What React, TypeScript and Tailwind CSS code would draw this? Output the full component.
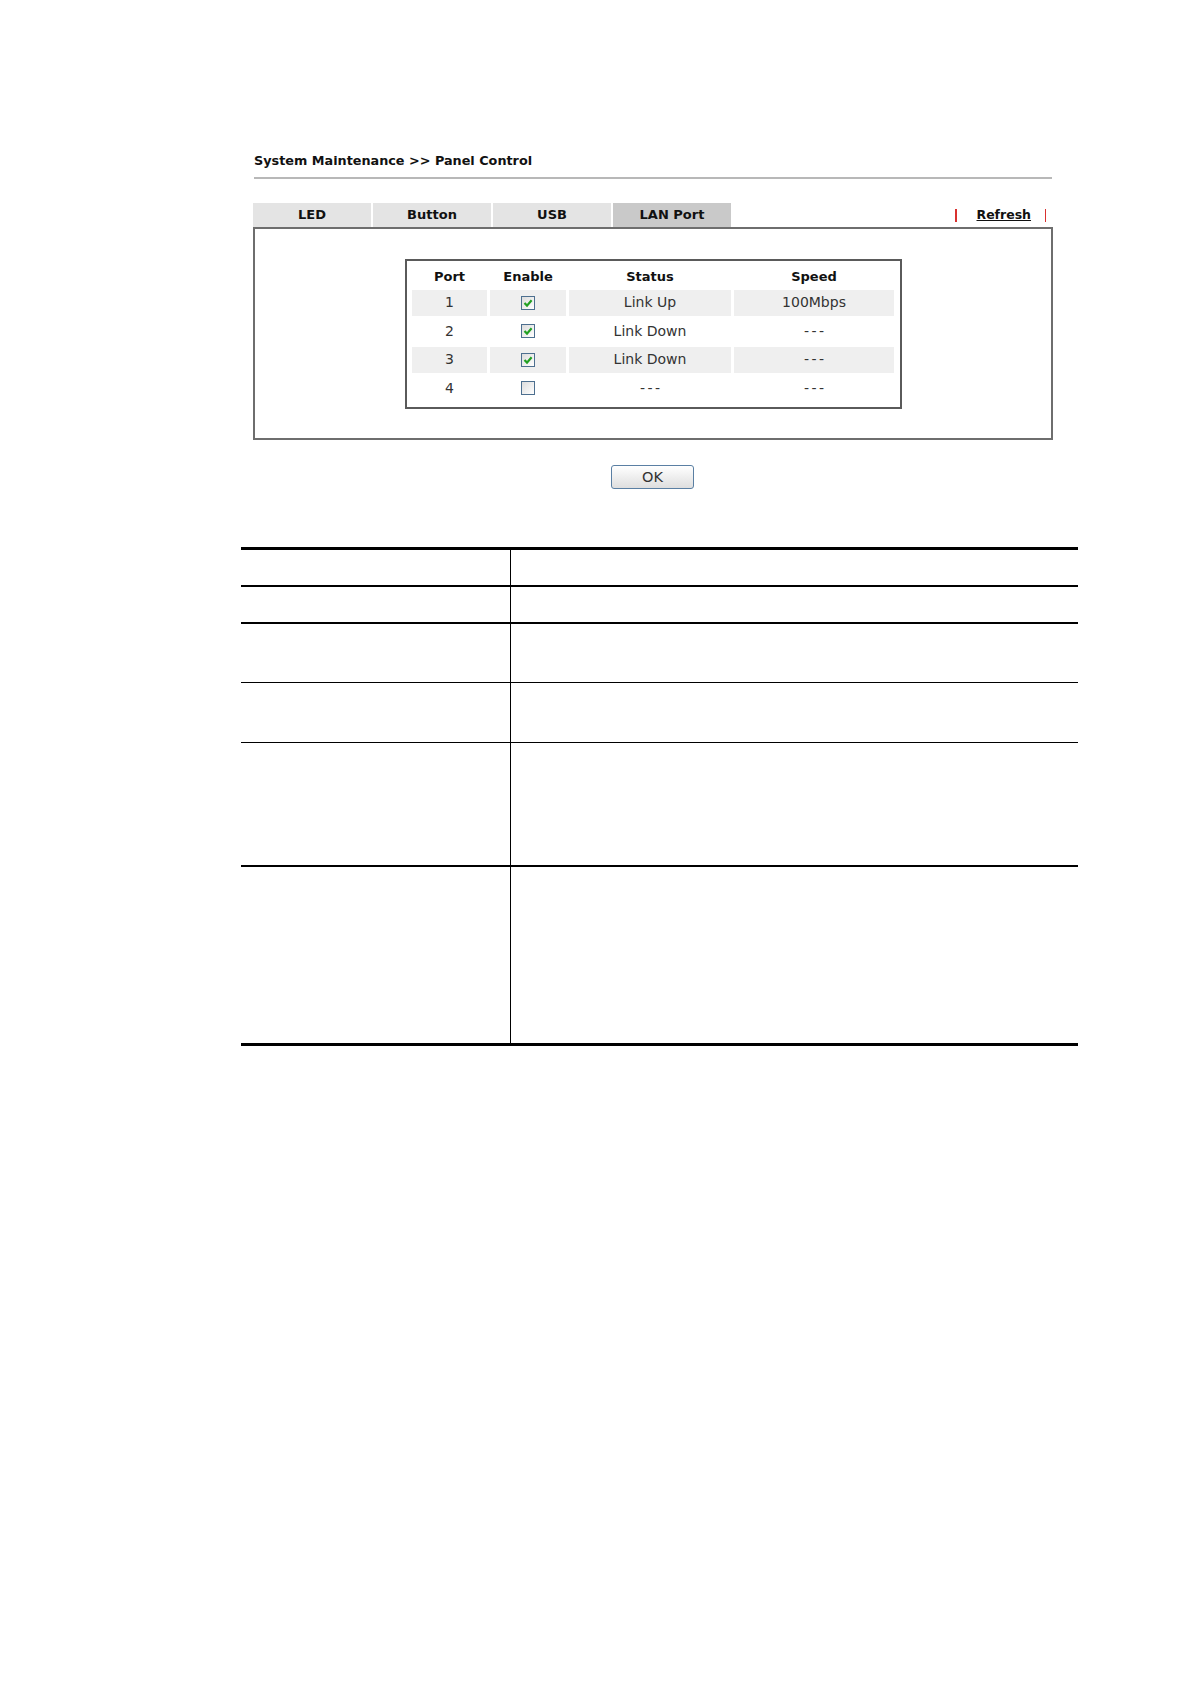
import React from "react";

const font = { fontFamily: '"DejaVu Sans", Verdana, sans-serif' };

function CheckBox({ checked }: { checked: boolean }) {
  return (
    <div className="w-[14px] h-[14px] border border-[#4d6f8f] bg-gradient-to-br from-[#dcdcdc] to-[#ffffff] flex items-center justify-center">
      {checked && (
        <svg width="10" height="10" viewBox="0 0 10 10">
          <path d="M1.5 5 L4 7.6 L8.6 2.2" fill="none" stroke="#22a022" strokeWidth="2.2" />
        </svg>
      )}
    </div>
  );
}

function Dash() {
  return <span className="tracking-[2.5px] pl-[2.5px]">---</span>;
}

const rows = [
  { port: "1", enable: true, status: "Link Up", speed: "100Mbps" },
  { port: "2", enable: true, status: "Link Down", speed: "---" },
  { port: "3", enable: true, status: "Link Down", speed: "---" },
  { port: "4", enable: false, status: "---", speed: "---" },
];

function Cell({ v }: { v: string }) {
  return v === "---" ? <Dash /> : <>{v}</>;
}

export default function App() {
  return (
    <div className="w-[1190px] min-h-[1684px] bg-white text-black" style={font}>
      <div className="pt-[153px] ml-[254px] w-[798px]">
        <div className="h-[16px] leading-[16px] text-[12.8px] font-bold text-[#111]">
          System Maintenance &gt;&gt; Panel Control
        </div>
        <div className="mt-[8px] h-[2px] bg-[#b8b8b8]" />
      </div>

      <div className="ml-[253px] w-[800px] mt-[24px]">
        <div className="flex items-stretch h-[24px]">
          <div className="flex gap-[2px]">
            {["LED", "Button", "USB", "LAN Port"].map((t, i) => (
              <div
                key={t}
                className={`w-[118px] h-[24px] flex items-center justify-center text-[13px] font-bold text-[#111] ${
                  i === 3 ? "bg-[#c9c9c9]" : "bg-[#e4e4e4]"
                }`}
              >
                {t}
              </div>
            ))}
          </div>
          <div className="flex-1" />
          <div className="flex items-center mr-[7px]">
            <span className="w-[1.5px] h-[13px] bg-[#d9312f]" />
            <span className="ml-[20px] w-[54px] text-[12.5px] font-bold underline text-[#111] leading-[16px]">
              Refresh
            </span>
            <span className="ml-[14px] w-[1.5px] h-[13px] bg-[#d9312f]" />
          </div>
        </div>

        <div className="h-[213px] border-2 border-[#6e6e6e] pt-[30px] pl-[150px]">
          <div className="w-[497px] h-[150px] border-2 border-[#5a5a5a] pl-[5px]">
            <div className="flex gap-[3px] h-[29px] items-center text-[13px] font-bold text-[#111] pt-[3px]">
              <div className="w-[75px] text-center">Port</div>
              <div className="w-[76px] text-center">Enable</div>
              <div className="w-[162px] text-center">Status</div>
              <div className="w-[160px] text-center">Speed</div>
            </div>
            <div className="flex flex-col gap-[3px]">
              {rows.map((r, i) => {
                const bg = i % 2 === 0 ? "bg-[#efefef]" : "bg-white";
                return (
                  <div key={r.port} className="flex gap-[3px] h-[25.5px] text-[14px] text-[#333]">
                    <div className={`w-[75px] flex items-center justify-center ${bg}`}>{r.port}</div>
                    <div className={`w-[76px] flex items-center justify-center ${bg}`}>
                      <CheckBox checked={r.enable} />
                    </div>
                    <div className={`w-[162px] flex items-center justify-center ${bg}`}>
                      <Cell v={r.status} />
                    </div>
                    <div className={`w-[160px] flex items-center justify-center ${bg}`}>
                      <Cell v={r.speed} />
                    </div>
                  </div>
                );
              })}
            </div>
          </div>
        </div>
      </div>

      <div className="flex justify-start ml-[611px] mt-[25px]">
        <button className="w-[83px] h-[24px] rounded-[3px] border border-[#5a7fa3] bg-gradient-to-b from-[#ffffff] to-[#dedede] text-[14.5px] leading-[20px] text-[#333]">
          OK
        </button>
      </div>

      <div className="ml-[241px] w-[837px] mt-[58px] border-t-[3px] border-b-[3px] border-black">
        {[
          { h: "h-[37px]", b: "border-b-2" },
          { h: "h-[37px]", b: "border-b-2" },
          { h: "h-[59px]", b: "border-b" },
          { h: "h-[60px]", b: "border-b" },
          { h: "h-[124px]", b: "border-b-2" },
          { h: "h-[176px]", b: "" },
        ].map((r, i) => (
          <div key={i} className={`flex ${r.h} ${r.b} border-black`}>
            <div className="w-[270px] border-r border-black" />
            <div className="flex-1" />
          </div>
        ))}
      </div>
    </div>
  );
}
